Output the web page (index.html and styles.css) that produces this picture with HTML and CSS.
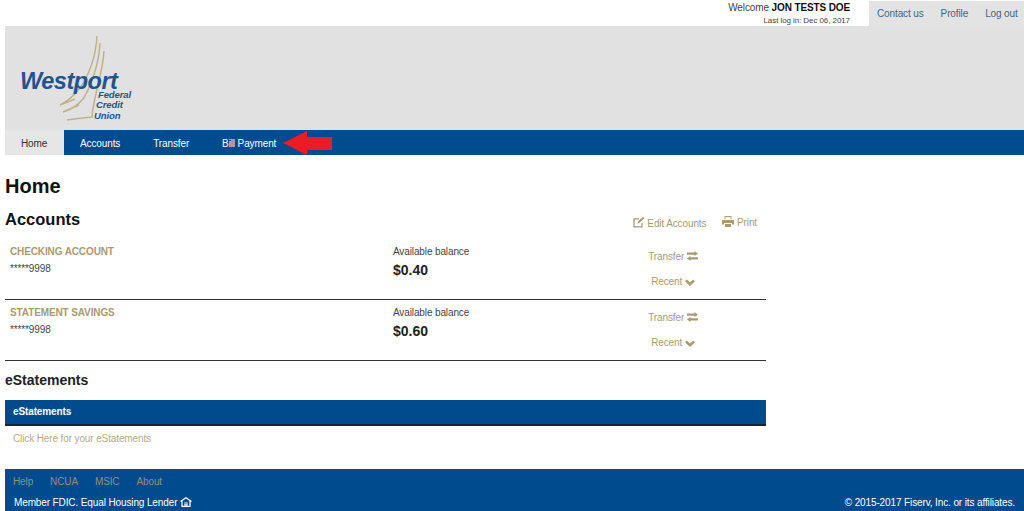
FILE: index.html
```html
<!DOCTYPE html>
<html lang="en">
<head>
    <meta charset="UTF-8">
    <meta name="viewport" content="width=device-width, initial-scale=1.0">
    <title>Westport Federal Credit Union - Home</title>
    <link rel="stylesheet" href="styles.css">
</head>
<body>
    <div class="top-bar">
        <div class="welcome">
            <div class="welcome-name">Welcome <b>JON TESTS DOE</b></div>
            <div class="last-login">Last log in: Dec 06, 2017</div>
        </div>
        <div class="top-links">
            <a href="#">Contact us</a>
            <a href="#">Profile</a>
            <a href="#">Log out</a>
        </div>
    </div>

    <div class="site-wrap">
        <div class="banner">
            <div class="logo">
                <svg class="logo-sails" width="55" height="95" viewBox="0 0 55 95" fill="none" stroke="#bfb28b" stroke-width="1.5">
                    <path d="M42 5 C41 25 34 45 24 58 C18 66 11 71 5 74 L20 68"/>
                    <path d="M45 12 C44 30 38 52 28 68 C22 75 15 79 8 81 L24 74"/>
                    <path d="M49 20 C48 38 42 56 39 72 C38 78 37 82 37 86 C28 87 20 88 12 89"/>
                </svg>
                <span class="logo-name">Westport</span>
                <span class="logo-sub logo-federal">Federal</span>
                <span class="logo-sub logo-credit">Credit</span>
                <span class="logo-sub logo-union">Union</span>
            </div>
        </div>

        <nav class="main-nav">
            <a href="#" class="active">Home</a>
            <a href="#">Accounts</a>
            <a href="#">Transfer</a>
            <a href="#">Bill Payment</a>
            <svg class="nav-arrow" width="49" height="25" viewBox="0 0 49 25">
                <path d="M0 13 L24 1 L24 7 L49 7 L49 20 L24 20 L24 25 Z" fill="#ed1c24"/>
            </svg>
        </nav>

        <main class="content">
            <h1>Home</h1>

            <div class="accounts-head">
                <h2>Accounts</h2>
                <div class="accounts-tools">
                    <a href="#">
                        <svg class="icon" width="12" height="12" viewBox="0 0 12 12" fill="none" stroke="#a89a73" stroke-width="1.3">
                            <path d="M9 7 V10.8 H1 V2.8 H6"/>
                            <path d="M4.5 7.6 L5 5.6 L10 .8 L11.4 2.2 L6.4 7.1 Z" fill="#a89a73" stroke="none"/>
                        </svg>
                        Edit Accounts
                    </a>
                    <a href="#">
                        <svg class="icon" width="12" height="11" viewBox="0 0 12 11" fill="#a89a73">
                            <path d="M2.5 0 H9.5 V3 H8.5 V1 H3.5 V3 H2.5 Z"/>
                            <path d="M0 4 H12 V8.5 H10 V7 H2 V8.5 H0 Z"/>
                            <path d="M3 8 H9 V11 H3 Z"/>
                        </svg>
                        Print
                    </a>
                </div>
            </div>

            <div class="account-row">
                <div class="account-info">
                    <a href="#" class="account-name">CHECKING ACCOUNT</a>
                    <div class="account-number">*****9998</div>
                </div>
                <div class="account-balance">
                    <div class="balance-label">Available balance</div>
                    <div class="balance-value">$0.40</div>
                </div>
                <div class="account-actions">
                    <a href="#">Transfer
                        <svg class="icon" width="11" height="10" viewBox="0 0 11 10" fill="#a89a73"><path d="M0 1.5 H7.5 V0 L11 2.7 L7.5 5 V3.7 H0 Z M11 6.3 H3.5 V5 L0 7.5 L3.5 10 V8.5 H11 Z"/></svg>
                    </a>
                    <a href="#">Recent
                        <svg class="icon" width="10" height="7" viewBox="0 0 10 7" fill="#a89a73"><path d="M0 2.2 L1.8 .4 L5 3.4 L8.2 .4 L10 2.2 L5 7 Z"/></svg>
                    </a>
                </div>
            </div>

            <div class="account-row">
                <div class="account-info">
                    <a href="#" class="account-name">STATEMENT SAVINGS</a>
                    <div class="account-number">*****9998</div>
                </div>
                <div class="account-balance">
                    <div class="balance-label">Available balance</div>
                    <div class="balance-value">$0.60</div>
                </div>
                <div class="account-actions">
                    <a href="#">Transfer
                        <svg class="icon" width="11" height="10" viewBox="0 0 11 10" fill="#a89a73"><path d="M0 1.5 H7.5 V0 L11 2.7 L7.5 5 V3.7 H0 Z M11 6.3 H3.5 V5 L0 7.5 L3.5 10 V8.5 H11 Z"/></svg>
                    </a>
                    <a href="#">Recent
                        <svg class="icon" width="10" height="7" viewBox="0 0 10 7" fill="#a89a73"><path d="M0 2.2 L1.8 .4 L5 3.4 L8.2 .4 L10 2.2 L5 7 Z"/></svg>
                    </a>
                </div>
            </div>

            <h3>eStatements</h3>
            <div class="panel-head">eStatements</div>
            <a href="#" class="panel-link">Click Here for your eStatements</a>
        </main>

        <footer class="site-footer">
            <div class="footer-links">
                <a href="#">Help</a>
                <a href="#">NCUA</a>
                <a href="#">MSIC</a>
                <a href="#">About</a>
            </div>
            <div class="footer-bottom">
                <span>Member FDIC. Equal Housing Lender
                    <svg class="icon" width="12" height="10" viewBox="0 0 12 10" fill="none" stroke="#fff" stroke-width="1.2"><path d="M.5 4.5 L6 .8 L11.5 4.5 M2 4 V9.4 H10 V4 M4.2 6 H7.8 M4.2 7.8 H7.8"/></svg>
                </span>
                <span>© 2015-2017 Fiserv, Inc. or its affiliates.</span>
            </div>
        </footer>
    </div>
</body>
</html>
```

FILE: styles.css
```css
* {
    box-sizing: border-box;
}
html, body {
    height: 511px;
    overflow: hidden;
}
body {
    margin: 0;
    background: white;
    font-family: "Liberation Sans", Arial, sans-serif;
    font-size: 10px;
    letter-spacing: -0.12px;
    color: #444;
}
a {
    text-decoration: none;
}
.icon {
    vertical-align: -1px;
}

.top-bar {
    display: flex;
    justify-content: flex-end;
    height: 26px;
}
.welcome {
    text-align: right;
    margin-right: 19px;
    padding-top: 1px;
}
.welcome-name {
    line-height: 13px;
}
.welcome-name b {
    color: #111;
}
.last-login {
    font-size: 8px;
    letter-spacing: -0.08px;
    line-height: 12px;
    margin-top: 1px;
}
.top-links {
    display: flex;
    gap: 17px;
    align-items: center;
    width: 155px;
    margin-top: 1px;
    padding-left: 8px;
    background: #e3e3e3;
    white-space: nowrap;
}
.top-links a {
    color: #3a6690;
}

.site-wrap {
    padding-left: 5px;
}
.banner {
    height: 104px;
    background: #e1e1e1;
}
.logo {
    position: relative;
    width: 130px;
    height: 104px;
}
.logo-sails {
    position: absolute;
    left: 50px;
    top: 5px;
}
.logo-name {
    position: absolute;
    left: 15px;
    top: 46px;
    font-size: 23.5px;
    line-height: 18px;
    font-weight: bold;
    font-style: italic;
    letter-spacing: -0.5px;
    color: #1d5591;
}
.logo-sub {
    position: absolute;
    font-size: 9.5px;
    line-height: 10px;
    font-weight: bold;
    font-style: italic;
    color: #1d5591;
}
.logo-federal {
    left: 93px;
    top: 64px;
}
.logo-credit {
    left: 91px;
    top: 74px;
}
.logo-union {
    left: 89px;
    top: 85px;
}

.main-nav {
    display: flex;
    align-items: center;
    height: 25px;
    background: #004b8d;
}
.main-nav a {
    display: block;
    height: 25px;
    line-height: 27px;
    padding: 0 16.5px;
    color: white;
}
.main-nav a.active {
    width: 59px;
    margin-right: -0.5px;
    padding: 0 0 0 16px;
    background: #e6e6e6;
    color: #333;
}
.nav-arrow {
    margin-left: -10px;
}

.content {
    width: 761px;
}
h1 {
    margin: 20px 0 0;
    font-size: 20px;
    letter-spacing: 0;
    line-height: 22px;
    color: #111;
}
.accounts-head {
    display: flex;
    justify-content: space-between;
    align-items: center;
    margin-top: 12px;
}
h2 {
    margin: 0;
    font-size: 16.5px;
    letter-spacing: 0;
    line-height: 20px;
    color: #111;
}
.accounts-tools {
    display: flex;
    gap: 16px;
    margin: 7px 9px 0 0;
}
.accounts-tools a {
    color: #a89a73;
}

.account-row {
    display: flex;
    height: 61px;
    padding-top: 6px;
    border-bottom: 1px solid #333;
}
.accounts-head + .account-row {
    height: 71px;
    padding-top: 16px;
}
.account-info {
    width: 388px;
    padding-left: 5px;
}
.account-name {
    display: block;
    line-height: 13px;
    font-weight: bold;
    color: #a89a73;
}
.account-number {
    margin-top: 4px;
    line-height: 13px;
}
.account-balance {
    width: 212px;
}
.balance-label {
    line-height: 13px;
}
.balance-value {
    margin-top: 3px;
    font-size: 14px;
    letter-spacing: 0;
    line-height: 18px;
    font-weight: bold;
    color: #222;
}
.account-actions {
    display: flex;
    flex-direction: column;
    align-items: center;
    gap: 12px;
    width: 136px;
    padding-top: 5px;
}
.account-actions a {
    line-height: 13px;
    color: #a89a73;
}

h3 {
    margin: 11px 0 0;
    font-size: 14px;
    letter-spacing: 0;
    line-height: 16px;
    color: #222;
}
.panel-head {
    height: 26px;
    margin-top: 12px;
    padding-left: 8px;
    background: #004b8d;
    border-bottom: 2px solid #1a2433;
    line-height: 24px;
    font-weight: bold;
    color: white;
}
.panel-link {
    display: block;
    margin-top: 6px;
    padding-left: 8px;
    line-height: 13px;
    color: #b5aa88;
}

.site-footer {
    position: absolute;
    left: 5px;
    right: 0;
    top: 469px;
    height: 42px;
    padding: 6px 9px 0 8px;
    background: #004b8d;
}
.footer-links {
    display: flex;
    gap: 17px;
    line-height: 13px;
}
.footer-links a {
    color: #8c9184;
}
.footer-bottom {
    display: flex;
    justify-content: space-between;
    margin-top: 8px;
    padding-left: 1px;
    line-height: 13px;
    color: white;
}
```
